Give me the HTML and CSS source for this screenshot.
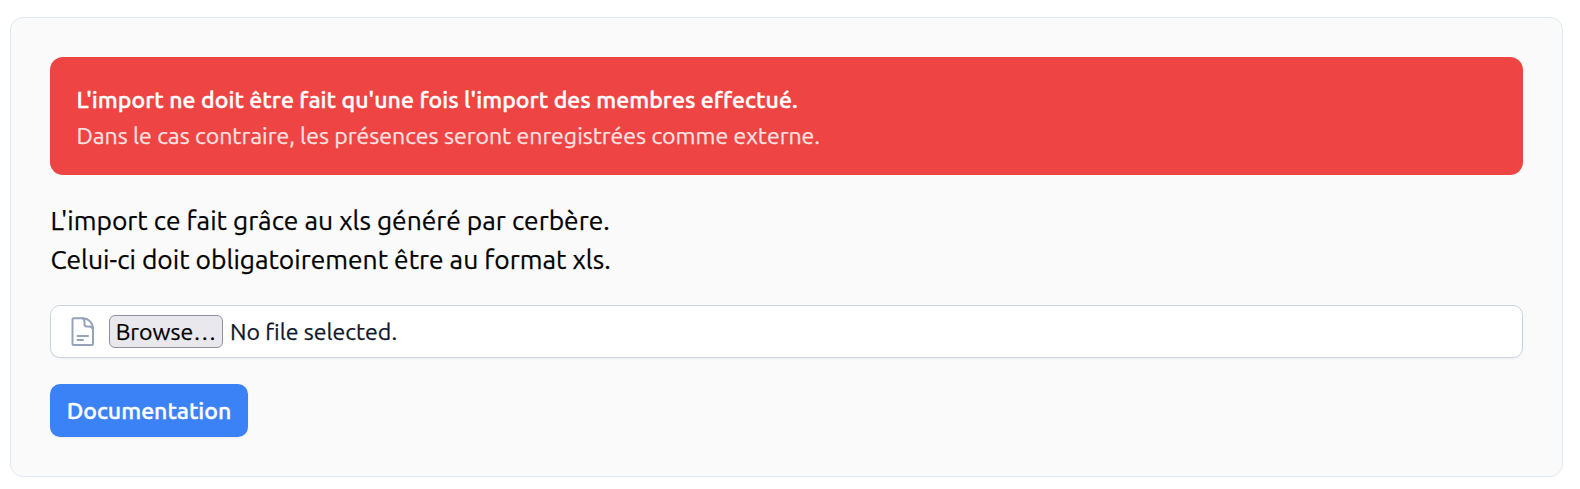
FILE: index.html
```
<!DOCTYPE html>
<html lang="fr">
<head>
<meta charset="utf-8">
<title>Import des présences</title>
<link rel="stylesheet" href="styles.css">
</head>
<body>
<main class="card">
  <section class="alert">
    <strong class="alert-title">L'import ne doit être fait qu'une fois l'import des membres effectué.</strong>
    <span class="alert-text">Dans le cas contraire, les présences seront enregistrées comme externe.</span>
  </section>
  <p class="intro">L'import ce fait grâce au xls généré par cerbère.<br>Celui-ci doit obligatoirement être au format xls.</p>
  <div class="file">
    <svg class="file-icon" width="24" height="30" viewBox="0 0 24 30" fill="none" stroke="#94a3b8" stroke-width="2" stroke-linecap="round" stroke-linejoin="round">
      <path d="M11.500 1.300H2.500Q1.500 1.300 1.500 2.300V27Q1.500 28 2.500 28H21Q22 28 22 27V12C22 6 17.500 1.300 11.500 1.300"/>
      <path d="M11.500 1.300Q13.500 2 13.500 5V7.600Q13.500 9.600 15.500 9.600H18Q21.500 9.600 22 12.500"/>
      <path d="M6.500 19H17M6.500 23H12"/>
    </svg>
    <button class="browse" type="button">Browse…</button>
    <span class="file-name">No file selected.</span>
  </div>
  <a class="doc">Documentation</a>
</main>
</body>
</html>
```
FILE: styles.css
```
* { box-sizing: border-box; }
body {
  margin: 0;
  padding: 17px 17px 0 10px;
  background: #fff;
  color: #000;
  font-family: Ubuntu, "Noto Sans", "Open Sans", sans-serif;
  -webkit-text-stroke: 0.25px currentColor;
}
.card {
  display: flex;
  flex-direction: column;
  align-items: stretch;
  height: 460px;
  padding: 39px;
  border: 1px solid #e2e8f0;
  border-radius: 13px;
  background: #fafafa;
}
.alert {
  display: flex;
  flex-direction: column;
  align-items: flex-start;
  height: 118px;
  padding: 24px 26.4px;
  border-radius: 13px;
  background: #ef4444;
  color: #fff;
  font-size: 23.1px;
  line-height: 36px;
  white-space: nowrap;
}
.alert-title {
  font-weight: 500;
  letter-spacing: 0.04px;
  -webkit-text-stroke: 0.4px #fff;
}
.alert-text { color: #fee2e2; -webkit-text-stroke: 0.25px #fee2e2; }
.intro {
  margin: 26px 0;
  padding-left: 0.4px;
  font-size: 26.4px;
  line-height: 39px;
}
.file {
  display: flex;
  align-items: center;
  height: 53px;
  padding-left: 20px;
  border: 1px solid #cbd5e1;
  border-radius: 10px;
  background: #fff;
  box-shadow: 0 1px 2px rgb(0 0 0 / 5%);
  color: #0f172a;
  font-size: 23.1px;
}
.file-icon { flex: none; margin-right: 14px; }
.file-name { padding-bottom: 2px; }
.browse {
  width: 114px;
  height: 33px;
  margin-right: 7px;
  padding: 0;
  border: 1px solid #8f8f9d;
  border-radius: 6px;
  background: #e9e9ed;
  color: #000;
  font: inherit;
  line-height: 29px;
}
.doc {
  display: flex;
  align-items: center;
  justify-content: center;
  width: 198px;
  height: 53px;
  margin-top: 26px;
  padding-bottom: 2px;
  border-radius: 10px;
  background: #3b82f6;
  box-shadow: 0 1px 2px rgb(0 0 0 / 5%);
  color: #fff;
  font-size: 23.1px;
  font-weight: 500;
  -webkit-text-stroke: 0.4px #fff;
}
```
